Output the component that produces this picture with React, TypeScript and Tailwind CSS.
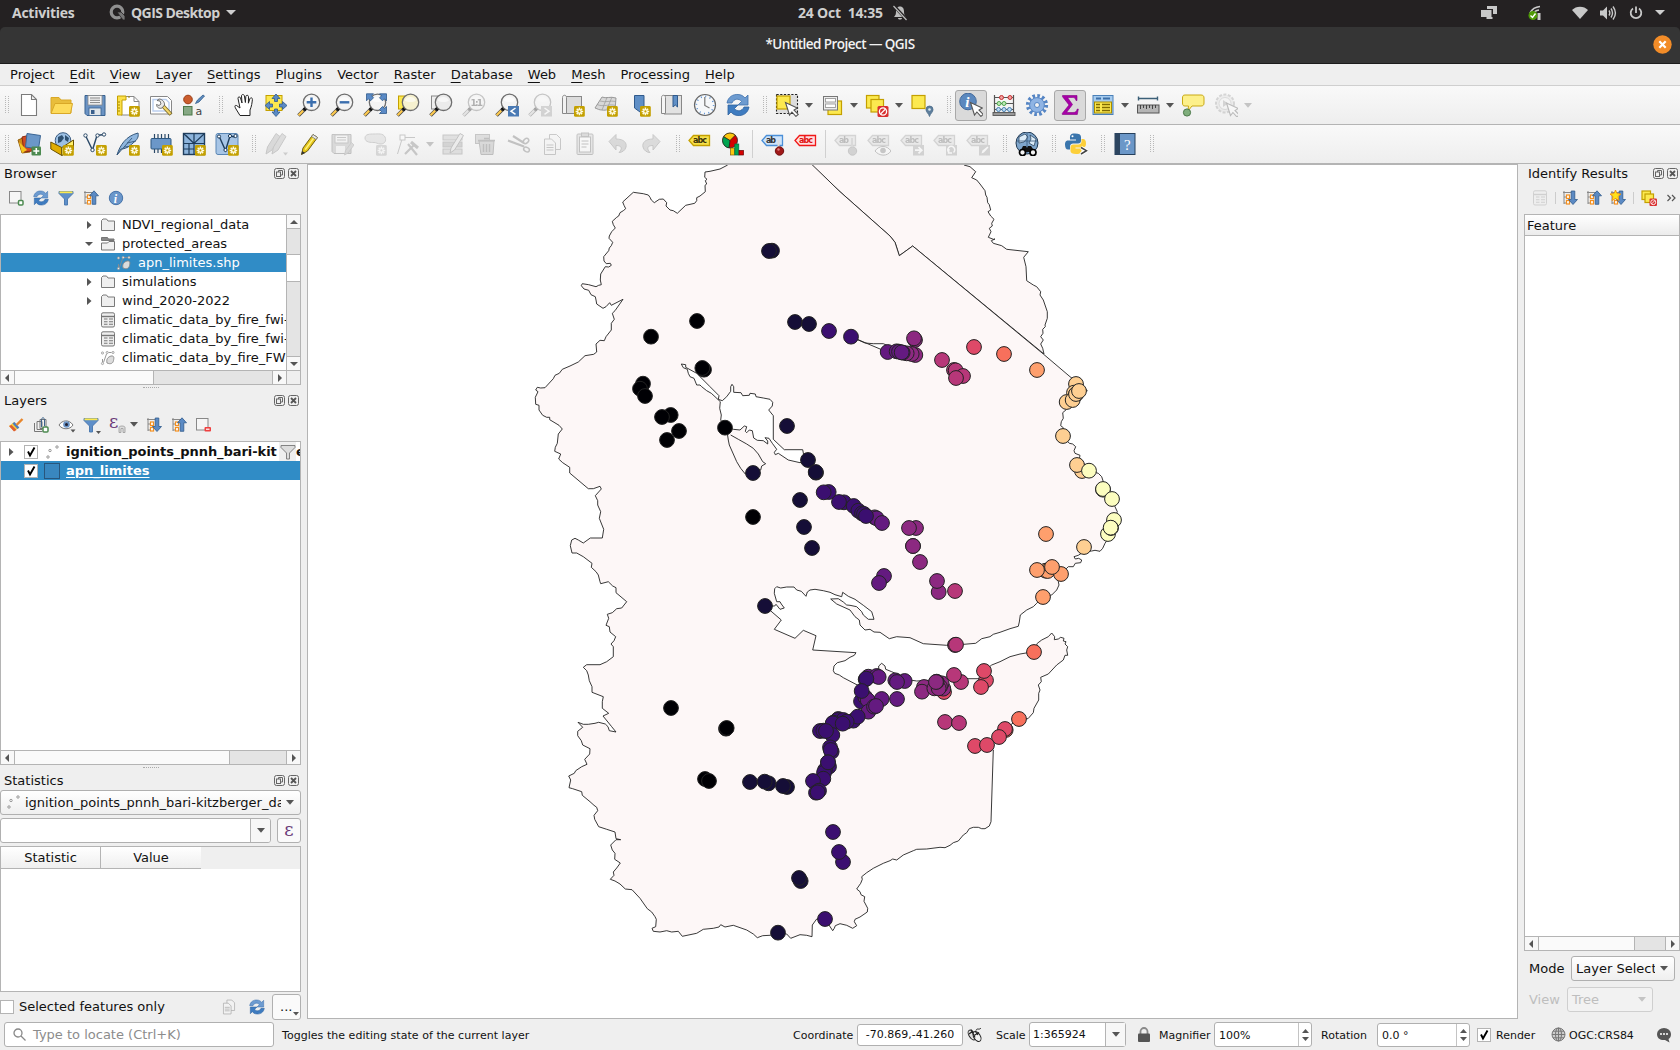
import React from "react";

type Kids = { children?: React.ReactNode };

/* ---------- shared icon pieces ---------- */

const Svg = ({ s = 24, children, cls = "" }: Kids & { s?: number; cls?: string }) => (
  <svg width={s} height={s} viewBox={`0 0 ${s} ${s}`} className={`block shrink-0 ${cls}`} fill="none">
    {children}
  </svg>
);

const Badge = ({ x = 13, y = 13 }: { x?: number; y?: number }) => (
  <g transform={`translate(${x} ${y})`}>
    <rect width="10.8" height="10.8" rx="1.4" fill="#c4a000" />
    <path d="M5.4 1.6v7.6M1.6 5.4h7.6M2.7 2.7l5.4 5.4M8.1 2.7L2.7 8.1" stroke="#fffbe0" strokeWidth="1.5" />
    <circle cx="5.4" cy="5.4" r="1.1" fill="#c4a000" />
  </g>
);

const Lens = ({ fill = "#f4f4f4" }: { fill?: string }) => (
  <g>
    <path d="M1.5 22.5l7-7" stroke="#454545" strokeWidth="3.6" />
    <path d="M1.6 22.2l4.6-4.6" stroke="#fcc94f" strokeWidth="2.2" />
    <path d="M7 17l3-3" stroke="#111" strokeWidth="3.4" />
    <circle cx="14.5" cy="9.3" r="8.2" fill={fill} stroke="#6e6e6e" strokeWidth="1.3" />
    <path d="M8.5 7.5a6.5 6.5 0 0 1 11.5 0c-3 2-8 2-11.5 0z" fill="#fff" opacity=".6" />
  </g>
);

const Cursor = ({ x = 0, y = 0 }: { x?: number; y?: number }) => (
  <path transform={`translate(${x} ${y})`} d="M0 0l4 12.5 2.4-3 4 4.4 2.3-2-4.2-4.4 3.3-2z" fill="#fff" stroke="#555" strokeWidth="1.1" />
);

const Pencil = () => (
  <g transform="translate(2 0)">
    <path d="M2.5 22.5l1.5-6.5L14 2.5l4.5 3L8.5 19z" fill="#e6c619" stroke="#705f12" strokeWidth="1" />
    <path d="M6.2 17.6L16.2 4" stroke="#fff27a" strokeWidth="1.6" />
    <path d="M14 2.5l4.5 3-1.5 2-4.5-3z" fill="#e8e8e8" stroke="#777" strokeWidth=".8" />
    <path d="M2.3 22.8l.9-3.8 3 2z" fill="#333" />
  </g>
);

const Refresh = ({ s = 24 }: { s?: number }) => (
  <svg width={s} height={s} viewBox="0 0 24 24" className="block shrink-0">
    <path d="M1 10C2 4 7 1 12 1.5c3 0 5.500 1.500 7 3.500l3-3v10H12l3.500-3.500C13 5 8 5.500 6 10z" fill="#6d9bd0" stroke="#3f71ad" strokeWidth=".8" />
    <path d="M23 14c-1 6-6 9-11 8.500-3 0-5.500-1.500-7-3.500l-3 3V12h10l-3.500 3.500C11 19 16 18.500 18 14z" fill="#3f7cc0" stroke="#2d62a0" strokeWidth=".8" />
  </svg>
);

const Tag = ({ fill, stroke, color, label = "abc" }: { fill: string; stroke: string; color: string; label?: string }) => (
  <g>
    <path d="M1 8.500L5.500 3.500H21.500V13.500H5.500z" fill={fill} stroke={stroke} strokeWidth="1.3" />
    <text x="5" y="11.200" fontSize="8" fontWeight="700" fontFamily="DejaVu Sans" fill={color} textLength={label === "abc" ? 14 : 10}>
      {label}
    </text>
  </g>
);

const Doc = () => <path d="M4.500 1.500h10l5 5v16h-15z M14.500 1.500v5h5" fill="#fff" stroke="#7b7b7b" strokeWidth="1.100" />;

const YellowSq = ({ x, y, w }: { x: number; y: number; w: number }) => (
  <rect x={x} y={y} width={w} height={w} fill="#fce94f" stroke="#c4a000" strokeWidth="1.200" />
);

const ForbidBadge = ({ x, y, s = 1 }: { x: number; y: number; s?: number }) => (
  <g transform={`translate(${x} ${y}) scale(${s})`}>
    <rect width="11" height="11" rx="1.500" fill="#d83030" />
    <circle cx="5.500" cy="5.500" r="3.600" stroke="#fff" strokeWidth="1.300" />
    <path d="M3 8l5-5" stroke="#fff" strokeWidth="1.300" />
  </g>
);

/* ---------- toolbar icons ---------- */

const icons: Record<string, React.ReactNode> = {
  newDoc: <Doc />,
  open: (
    <g stroke="#d9a827">
      <path d="M1 20V4.500h8l2 2.500h10v13z" fill="#e8bd3c" />
      <path d="M1 20.500l4-10h17.500l-2 10z" fill="#fddb5b" />
    </g>
  ),
  save: (
    <g>
      <path d="M2 2.500h20v20H4l-2-2z" fill="#6a93c4" stroke="#39628f" />
      <rect x="5" y="2.500" width="14" height="9.500" fill="#f4f4f4" stroke="#8a8a8a" strokeWidth=".8" />
      <path d="M7 5h10M7 7.300h10M7 9.600h10" stroke="#777" strokeWidth=".9" />
      <rect x="6" y="15" width="12" height="7.500" fill="#dfe5ea" stroke="#39628f" strokeWidth=".8" />
      <rect x="8" y="17" width="3.500" height="4" fill="#395f8c" />
    </g>
  ),
  newLayout: (
    <g>
      <path d="M5 3.500h13l5 5V22H5z" fill="#fff" stroke="#888" />
      <path d="M18 3.500v5h5" stroke="#888" />
      <path d="M1.500 3h8.500v4H6v15H1.500z" fill="#fbe04a" stroke="#c4a000" />
      <path d="M2 9h2M2 12h2M2 15h2M2 18h2M13 3v2" stroke="#a38600" />
      <Badge />
    </g>
  ),
  layoutMgr: (
    <g>
      <path d="M1.500 3.500h17l4 4V21h-21z" fill="#fff" stroke="#888" />
      <path d="M4 6.500h13l3 3V18H4z" stroke="#bcd0f0" strokeWidth="1.400" />
      <path d="M14 13l8 8.500" stroke="#7a6a2a" strokeWidth="4" />
      <path d="M14.500 13.500l7 7.500" stroke="#f2d56a" strokeWidth="2.200" />
      <path d="M8 7.500l3 .5 1 3-2 1.500-2.500-1c0 3 3 4.500 5.500 3.500l2.500-3C16 9 13 6 10 6z" fill="#e8e8e8" stroke="#666" strokeWidth=".9" />
    </g>
  ),
  style: (
    <g>
      <circle cx="6" cy="6.500" r="4.300" fill="#cb5d2d" stroke="#9c3d14" />
      <path d="M13.500 10.500l2-3.500L21 2l1.500 1-5.500 6z" fill="#5f8cc0" stroke="#2f5c8c" strokeWidth=".8" />
      <rect x="1.500" y="13.500" width="8.500" height="8.500" fill="#86a884" stroke="#4b7849" />
      <text x="13.500" y="21.500" fontSize="11" fontFamily="DejaVu Sans" fill="#444">a</text>
    </g>
  ),
  hand: (
    <path transform="translate(2.500 0)" d="M6.500 22.500l-4-6.500C1 13.500 1 12 3 12.500L6.500 15 4.500 5.500C4.300 3.500 6.500 3.300 7 5l1.500 5L8 3c0-2 2.600-2 2.900 0l1 6.500.4-6c.2-1.800 2.700-1.600 2.700.2l-.1 6.500 1.500-4.500c.6-1.500 2.700-1 2.500.8-.3 3-.8 7-2.400 10.500v5.500z" fill="#fff" stroke="#222" strokeWidth="1" />
  ),
  panSel: (
    <g>
      <rect x="2" y="2.500" width="16" height="15" fill="#fce94f" stroke="#c4a000" />
      <g fill="#5a8ac6" stroke="#305a8c" strokeWidth=".8">
        <path d="M12 1l4 4.500h-2.500v3h-3v-3H8z" />
        <path d="M12 23.500l4-4.500h-2.500v-3h-3v3H8z" />
        <path d="M1 12.500l4.500-4V11h3v3h-3v2.500z" />
        <path d="M23 12.500l-4.500-4V11h-3v3h3v2.500z" />
      </g>
    </g>
  ),
  zoomIn: (
    <g>
      <Lens />
      <path d="M14.500 4.500v9.600M9.700 9.300h9.600" stroke="#3b6fae" strokeWidth="2.400" />
    </g>
  ),
  zoomOut: (
    <g>
      <Lens />
      <path d="M9.700 9.300h9.600" stroke="#3b6fae" strokeWidth="2.400" />
    </g>
  ),
  zoomFull: (
    <g>
      <Lens />
      <g fill="#5a8ac6" stroke="#305a8c" strokeWidth=".8">
        <path d="M3.500.8h7l-2 2 2 2-3 3-2-2-2 2z" />
        <path d="M23.500.8h-7l2 2-2 2 3 3 2-2 2 2z" />
        <path d="M23.500 20.500h-7l2-2-2-2 3-3 2 2 2-2z" />
      </g>
    </g>
  ),
  zoomSel: (
    <g>
      <rect x="2.500" y="3" width="13" height="13" fill="#fce94f" stroke="#c4a000" />
      <Lens fill="#f6f1cf" />
    </g>
  ),
  zoomLayer: (
    <g>
      <rect x="2.500" y="3" width="13" height="13" fill="#eee" stroke="#888" />
      <Lens fill="#ebebeb" />
    </g>
  ),
  zoomNative: (
    <g>
      <Lens />
      <text x="8.500" y="13" fontSize="9" fontWeight="700" fontFamily="DejaVu Sans" fill="#333" textLength="12.500">1:1</text>
    </g>
  ),
  zoomLast: (
    <g>
      <Lens />
      <rect x="13" y="13" width="11" height="10.500" fill="#4a7ab4" />
      <path d="M20.500 15l-4.500 3.200 4.500 3.200" stroke="#fff" strokeWidth="1.500" />
    </g>
  ),
  zoomNext: (
    <g>
      <Lens />
      <rect x="13" y="13" width="11" height="10.500" fill="#9a9a9a" />
      <path d="M16.500 15l4.500 3.200-4.500 3.200" stroke="#fff" strokeWidth="1.500" />
    </g>
  ),
  newMap: (
    <g>
      <rect x="4.500" y="3.500" width="16" height="17" fill="#dcdcdc" stroke="#888" />
      <path d="M1.500 20.500v-16c0-3 4-3 4 0v16z" fill="#f2f2f2" stroke="#888" />
      <Badge />
    </g>
  ),
  new3d: (
    <g stroke="#999">
      <path d="M1 15L8 4c4 2 8-1 14 1l-1 12c-5-2-9 1-13 0-3 0-4-1-7-2z" fill="#d8d8d8" />
      <path d="M3 11.500c7 3 12-1 18.500 1M6 8c6 2 10-1 16 .5M8 17L13 4.500M13 16L18 4" strokeWidth=".7" />
      <g stroke="none">
        <Badge />
      </g>
    </g>
  ),
  bookmarkNew: (
    <g>
      <path d="M7.500 2.500h9.500v18l-4-1.500-5.500-4z" fill="#5f8fc6" stroke="#305a8c" />
      <Badge />
    </g>
  ),
  bookmarks: (
    <g>
      <rect x="4.500" y="2.500" width="17" height="18.500" fill="#e2e2e2" stroke="#888" />
      <path d="M1.500 20.500v-16c0-3 4-3 4 0v16z" fill="#f5f5f5" stroke="#888" />
      <path d="M13 2.500h4.500V14l-2.200-2-2.300 2z" fill="#5f8fc6" stroke="#305a8c" />
    </g>
  ),
  clock: (
    <g>
      <circle cx="12" cy="12" r="10.500" fill="#f6f8fa" stroke="#666" strokeWidth="1.200" />
      <circle cx="12" cy="12" r="8.600" stroke="#5b8fd0" strokeWidth="1.600" strokeDasharray="1 3.500" />
      <path d="M11.800 4v8.500l4.700 2.500" stroke="#777" strokeWidth="1.200" />
    </g>
  ),
  selectRect: (
    <g>
      <rect x="1.500" y="1.500" width="21" height="19" fill="#ddd" stroke="#222" strokeWidth="1.100" strokeDasharray="2.200 1.500" />
      <YellowSq x={2} y={3} w={13} />
      <Cursor x={10.500} y={9.500} />
    </g>
  ),
  selectValue: (
    <g>
      <YellowSq x={8} y={8} w={13.500} />
      <rect x="3.500" y="3.500" width="14" height="13.500" fill="#ededed" stroke="#777" />
      <rect x="5.500" y="5.500" width="10" height="3.500" fill="#fff" stroke="#999" strokeWidth=".9" />
      <rect x="5.500" y="11" width="10" height="3.500" fill="#fff" stroke="#999" strokeWidth=".9" />
    </g>
  ),
  deselect: (
    <g>
      <YellowSq x={1.500} y={2.500} w={12.500} />
      <YellowSq x={6} y={6.500} w={12.500} />
      <ForbidBadge x={12.500} y={13} />
    </g>
  ),
  selectLoc: (
    <g>
      <YellowSq x={2} y={2.500} w={13} />
      <path d="M19.500 23.500c-1-3.500-3.500-4-3.500-7a3.500 3.500 0 0 1 7 0c0 3-2.500 3.500-3.500 7z" fill="#5d7e9c" stroke="#496a88" strokeWidth=".8" />
      <circle cx="19.500" cy="16.500" r="1.300" fill="#dbe8f2" />
    </g>
  ),
  identify: (
    <g>
      <circle cx="9" cy="8.500" r="8.300" fill="#5b88be" stroke="#41699b" />
      <text x="6.300" y="14.200" fontSize="15" fontStyle="italic" fontWeight="700" fontFamily="Liberation Serif" fill="#fff">i</text>
      <Cursor x={11.500} y={9.500} />
    </g>
  ),
  abacus: (
    <g stroke="#555">
      <path d="M2.500 2v18M21.500 2v18M2.500 4.500h19M2.500 10.500h19M2.500 16.500h19" strokeWidth="1.200" />
      <rect x="1" y="19.500" width="22" height="3" fill="#999" strokeWidth=".9" />
      <g fill="#f0a0a0" stroke="#c62f2f"><circle cx="9.500" cy="4.500" r="2" /><circle cx="18" cy="4.500" r="2" /></g>
      <g fill="#bfe8b8" stroke="#4aa84a"><circle cx="7" cy="10.500" r="2" /><circle cx="12" cy="10.500" r="2" /></g>
      <g fill="#bcdcf5" stroke="#4a80b0"><circle cx="6.500" cy="16.500" r="2" /><circle cx="12" cy="16.500" r="2" /><circle cx="17.500" cy="16.500" r="2" /></g>
    </g>
  ),
  gear: (
    <g>
      <circle cx="12" cy="12" r="9.200" stroke="#5585c4" strokeWidth="3.800" strokeDasharray="2.600 2.217" />
      <circle cx="12" cy="12" r="7.400" fill="#8fb4e4" stroke="#5585c4" />
      <circle cx="12" cy="12" r="2.500" fill="#f2f2f2" stroke="#5585c4" />
    </g>
  ),
  sigma: <path d="M4.500 2.500h14.500v5h-1c-.5-2.500-1.500-3-3.500-3H9.500l5 7-6 8h6.500c2.500 0 3.500-1 4.300-3.500h1l-1 5.500H4.300v-1.200L11 12 4.500 3.700z" fill="#a800a8" stroke="#800080" strokeWidth=".6" />,
  table: (
    <g>
      <rect x="2" y="2.500" width="20" height="19" fill="#a5cbef" stroke="#4a80b8" />
      <path d="M5 5.500h5M12 5.500h7" stroke="#3d70a8" strokeWidth="1.800" />
      <rect x="3.500" y="9" width="17" height="11" fill="#fce94f" stroke="#a98c00" />
      <path d="M5 11.500h4M11 11.500h8M5 14.500h4M11 14.500h8M5 17.500h4M11 17.500h8" stroke="#806a00" strokeWidth="1.300" />
    </g>
  ),
  ruler: (
    <g>
      <path d="M2 5.500h20M2.500 3.500v4M21.500 3.500v4" stroke="#3c6078" strokeWidth="1.400" />
      <rect x="1.500" y="12" width="21.500" height="8" fill="#b5b5b5" stroke="#555" />
      <path d="M4.500 12v4M7.500 12v3M10.500 12v4M13.500 12v3M16.500 12v4M19.500 12v3" stroke="#444" />
    </g>
  ),
  tips: (
    <g>
      <path d="M4 2h16c2 0 3 1 3 3v5c0 2-1 3-3 3h-9l-4 5 .5-5H4c-2 0-2.500-1-2.500-3V5c0-2 .5-3 2.500-3z" fill="#fdf08a" stroke="#c9a914" />
      <circle cx="6" cy="19.500" r="3.600" fill="#7fae7c" stroke="#4b7849" />
    </g>
  ),
  action: (
    <g>
      <circle cx="11" cy="10.500" r="9" fill="#ddd" stroke="#999" strokeWidth="2" strokeDasharray="3 1.500" />
      <circle cx="11" cy="10.500" r="6" fill="#f4f4f4" stroke="#aaa" />
      <path d="M9 7l5 3.500L9 14z" fill="#999" />
      <Cursor x={12.500} y={10} />
    </g>
  ),
  dsManager: (
    <g>
      <path d="M1 8l7-3 5 15-8 1z" fill="#d08a1c" stroke="#94600c" />
      <path d="M5 5l8-2 2 16-8 1z" fill="#cf4a24" stroke="#8c2c10" />
      <path d="M2 10l8 8-5 3z" fill="#f5c51e" />
      <path d="M10 1.500l13.500 2-2 13.500-13-2z" fill="#6b97c8" stroke="#3a6594" />
      <rect x="14.500" y="14.500" width="9.500" height="9" rx="1" fill="#4c8a50" />
      <path d="M19.300 16v6M16.300 19h6" stroke="#fff" strokeWidth="1.600" />
    </g>
  ),
  geopackage: (
    <g>
      <circle cx="13" cy="8.500" r="7.800" fill="#9cc0e4" stroke="#3c5c80" />
      <path d="M8 5l4-2 2 3-3 4-3 1zM15 3l4 3-1 4-3-2z" fill="#2e5070" />
      <path d="M.8 10l11 5.500v8L.8 17z" fill="#e0ad00" stroke="#6b5200" />
      <path d="M11.800 15.500L23.500 8v9.500l-11.700 6z" fill="#fff06a" stroke="#6b5200" />
      <Badge />
    </g>
  ),
  shapefile: (
    <g>
      <path d="M2.500 3.500l7 14.500 4.500-14.500 7-1" stroke="#2c4a68" strokeWidth="1.400" />
      <g fill="#fff" stroke="#2c4a68"><circle cx="2.500" cy="3.500" r="1.700" /><circle cx="9.500" cy="18" r="1.700" /><circle cx="14.500" cy="3.500" r="1.700" /><circle cx="21" cy="2.500" r="1.700" /></g>
      <Badge />
    </g>
  ),
  spatialite: (
    <g>
      <path d="M1 23C4 13 10 4 22 1c1 4-1 7-5 10-4 4-8 6-12 6z" fill="#8fb6de" stroke="#35587c" />
      <path d="M1 23L16 6M8 15l9-1M11 11l9-2" stroke="#35587c" strokeWidth=".9" />
      <Badge />
    </g>
  ),
  memory: (
    <g>
      <path d="M5.500 2v5M9 2v5M12.500 2v5M16 2v5M19.500 2v5M5.500 16v5M9 16v5M12.500 16v5" stroke="#2c4a68" strokeWidth="1.200" />
      <rect x="2" y="6.500" width="20" height="10.500" rx="1" fill="#6b97c8" stroke="#2f5880" />
      <Badge />
    </g>
  ),
  mesh: (
    <g>
      <rect x="1.500" y="1.500" width="21" height="21" fill="#8db4dc" stroke="#1f3d5c" strokeWidth="1.400" />
      <path d="M1.500 11.500h21M12 1.500v21M1.500 1.500L12 11.500 22.500 1.500M7 11.500v11M1.500 17h10.500M12 11.500l-8 -8" stroke="#1f3d5c" strokeWidth="1.200" />
      <Badge />
    </g>
  ),
  virtual: (
    <g>
      <rect x="1" y="1.500" width="22" height="21" rx="2" fill="#a7c5e6" stroke="#5a86b4" />
      <path d="M4 4l6.500 14.500L15 4l5 1" stroke="#1f3d5c" strokeWidth="1.400" />
      <g fill="#fff" stroke="#1f3d5c"><circle cx="4" cy="4.500" r="1.600" /><circle cx="10.500" cy="18" r="1.600" /><circle cx="15" cy="4" r="1.600" /><circle cx="20.500" cy="4" r="1.600" /></g>
      <Badge />
    </g>
  ),
  edits: (
    <g>
      <path d="M2 22l1.500-7L12 1.500l4 3L8 18z" fill="#aaa" stroke="#777" />
      <path d="M8 22l1.500-7L18 1.500l4 3L14 18z" fill="#b8b0a8" stroke="#777" />
      <path d="M19 20.500h5l-2.500 3z" fill="#888" />
    </g>
  ),
  pencil: <Pencil />,
  saveEdits: (
    <g>
      <path d="M2 2.500h19v19H4l-2-2z" fill="#aaa" stroke="#666" />
      <rect x="5" y="3" width="13" height="8" fill="#eee" stroke="#777" />
      <path d="M7 5.500h9M7 8h9" stroke="#777" />
      <rect x="6" y="14" width="9" height="7" fill="#eee" />
      <path d="M14.500 23l1-4.500 6-8 2.500 2.500-6 8z" fill="#c8a090" stroke="#a07060" strokeWidth=".8" />
    </g>
  ),
  addPoly: (
    <g>
      <path d="M2 6c0-4 5-4 9-4s9-1 11 3-1 7-4 7c-4 0-4-1.500-7-1.500s-9 0-9-4.500z" fill="#ccc" stroke="#888" />
      <g opacity=".9"><Badge /></g>
    </g>
  ),
  vertex: (
    <g stroke="#777">
      <path d="M1.500 22L6.500 5.500H19" />
      <rect x="4" y="3" width="5" height="5" fill="#fff" />
      <path d="M9 22l9-9M12 12l9 11" strokeWidth="2.200" />
      <path d="M15 10l7 6" strokeWidth="3" />
    </g>
  ),
  modify: (
    <g>
      <rect x="2" y="3" width="19" height="5" fill="#bbb" stroke="#777" />
      <rect x="2" y="10" width="19" height="5" fill="#999" stroke="#777" />
      <rect x="2" y="17" width="19" height="5" fill="#bbb" stroke="#777" />
      <path d="M9 21l1-5L19 1.500l3.500 2L13.500 18z" fill="#ddd" stroke="#666" />
    </g>
  ),
  trash: (
    <g>
      <rect x="1.500" y="2.500" width="14" height="9" fill="#d8a8a0" stroke="#966" />
      <path d="M5 9h15l-1 13.500H7z" fill="#c8a0a0" stroke="#855" />
      <path d="M4 8.500h17M10 6.500h5M9.500 12v8M12.500 12v8M15.500 12v8" stroke="#855" strokeWidth="1.400" />
    </g>
  ),
  cut: (
    <g stroke="#666" strokeWidth="1.500">
      <path d="M1 8.500l16 6M6 4l11 7" strokeWidth="2.200" />
      <ellipse cx="19" cy="9" rx="3" ry="2.200" transform="rotate(-40 19 9)" />
      <ellipse cx="19.500" cy="17.500" rx="3" ry="2.200" transform="rotate(30 19.500 17.500)" />
    </g>
  ),
  copy: (
    <g fill="#f4f4f4" stroke="#777">
      <path d="M9.500 2.500h7l4 4v11h-11z" />
      <path d="M4.500 7h7l4 4v11.500h-11z" />
      <path d="M6.500 13h7M6.500 15.500h7M6.500 18h7" />
    </g>
  ),
  paste: (
    <g stroke="#666">
      <rect x="4" y="2" width="16" height="20.500" rx="1" fill="#ccc" />
      <rect x="6.500" y="5" width="11" height="15" fill="#fff" />
      <rect x="8.500" y="1" width="7" height="3.500" fill="#aaa" />
      <path d="M8.500 9h7M8.500 12h7M8.500 15h5" />
    </g>
  ),
  undo: <path d="M3 9.500l7-7v4.500c8 0 11 4 10 8-.8 3.500-4 5.500-7 5.500 3-3 4-7-3-7v4.500z" fill="#a9a9a9" stroke="#777" />,
  redo: <path d="M21 9.500l-7-7v4.500C6 7 3 11 4 15c.8 3.500 4 5.500 7 5.500-3-3-4-7 3-7v4.500z" fill="#a9b2a9" stroke="#777" />,
  label: <Tag fill="#f7e04a" stroke="#c4a000" color="#3a3208" />,
  diagram: (
    <g>
      <circle cx="9" cy="8.500" r="7.500" fill="#d40000" />
      <path d="M9 8.500L2.500 4.500A7.500 7.500 0 0 1 14.500 3z" fill="#fcc60e" />
      <path d="M9 8.500L2.500 4.700A7.500 7.500 0 0 0 8 16z" fill="#00a551" />
      <path d="M9 8.500L2.500 4.500M9 8.500L8 16M9 8.500L14.500 3" stroke="#222" strokeWidth=".8" />
      <circle cx="9" cy="8.500" r="7.500" stroke="#222" strokeWidth=".8" />
      <rect x="9.500" y="16" width="4" height="7" fill="#fcc60e" stroke="#806000" strokeWidth=".7" />
      <rect x="13.800" y="12" width="4" height="11" fill="#00a551" stroke="#064" strokeWidth=".7" />
      <rect x="18" y="18.500" width="4.500" height="4.500" fill="#d40000" stroke="#600" strokeWidth=".7" />
    </g>
  ),
  labelPin: (
    <g>
      <Tag fill="#cfe4fa" stroke="#4a8fd8" color="#333" label="ab" />
      <path d="M17.500 8v10" stroke="#ddd" strokeWidth="2" />
      <circle cx="18.500" cy="19" r="4.200" fill="#a01818" stroke="#701010" />
      <circle cx="17.500" cy="17.500" r="1.200" fill="#e08080" />
    </g>
  ),
  labelRed: <Tag fill="#ffdede" stroke="#f01818" color="#e01010" />,
  labelPin2: (
    <g>
      <Tag fill="#ddd8b8" stroke="#a09870" color="#555" label="ab" />
      <circle cx="18.500" cy="19" r="4.200" fill="#999" stroke="#777" />
      <path d="M18 6v9" stroke="#aaa" strokeWidth="2" />
    </g>
  ),
  labelEye: (
    <g>
      <Tag fill="#ddd8b8" stroke="#a09870" color="#555" />
      <path d="M8 19c4-6 12-6 16 0-4 6-12 5-16 0z" fill="#fff" stroke="#666" />
      <circle cx="16" cy="18.500" r="2.800" fill="#777" />
    </g>
  ),
  labelMove: (
    <g>
      <Tag fill="#ddd8b8" stroke="#a09870" color="#555" />
      <rect x="13" y="13" width="11" height="10.500" fill="#999" />
      <path d="M15 18.200h6M18.500 15l3.300 3.200-3.300 3.200" stroke="#fff" strokeWidth="1.700" />
    </g>
  ),
  labelRotate: (
    <g>
      <Tag fill="#ddd8b8" stroke="#a09870" color="#555" />
      <rect x="13" y="13" width="11" height="10.500" fill="#999" />
      <path d="M16 20.500a3.500 3.500 0 1 1 4.500 0M16 17l-.5 4 3.500 0" stroke="#fff" strokeWidth="1.500" />
    </g>
  ),
  labelEdit: (
    <g>
      <Tag fill="#ddd8b8" stroke="#a09870" color="#555" />
      <rect x="13" y="13" width="11" height="10.500" fill="#999" />
      <path d="M15.500 21.500l1-3 5-4 1 1-4.500 5z" fill="#fff" />
    </g>
  ),
  metasearch: (
    <g>
      <circle cx="12" cy="11" r="11" fill="#7fa6cc" stroke="#203850" />
      <path d="M4 5l6-3 3 3-4 5-5 1zM15 3l6 4-2 7-5-3 2-4z" fill="#dcecf8" stroke="#203850" strokeWidth=".7" />
      <path d="M12 1v20M1.500 9h21" stroke="#36597c" strokeWidth=".8" />
      <path d="M5 20l3-6h3l1 2 1-2h3l4 6z" fill="#111" />
      <circle cx="7.500" cy="20.500" r="3" fill="#f4f4f4" stroke="#000" strokeWidth="1.700" />
      <circle cx="18" cy="20.500" r="3" fill="#f4f4f4" stroke="#000" strokeWidth="1.700" />
    </g>
  ),
  python: (
    <g>
      <path d="M11 1.500c-5 0-5 2-5 5v1h6v1H4C1.500 8.500 1 11 1 12.500c0 3 1 5 3 5h2v-3c0-2 1.500-3 3-3h5c2 0 3-1 3-3V5c0-2.500-2-3.500-6-3.500z" fill="#3a75ac" />
      <path d="M12 22c5 0 5.500-2 5.500-4.500V16.500h-6v-1h7.500c2.500 0 3-2 3-4 0-3-1-4.500-3-4.500h-1.500v2.500c0 2-1.500 3-3 3H9.500c-2 0-3 1-3 3V19c0 2 2 3 5.500 3z" fill="#fccf3a" />
      <circle cx="8.500" cy="4.300" r="1" fill="#fff" />
      <path d="M17 15.500l5.500 3.200L17 22" stroke="#fff" strokeWidth="3.500" />
      <path d="M17 15.500l5.500 3.200L17 22" stroke="#444" strokeWidth="1.500" />
    </g>
  ),
  help: (
    <g>
      <rect x="2" y="1.500" width="20" height="21" fill="#6b97c8" stroke="#26405c" />
      <rect x="2" y="1.500" width="5" height="21" fill="#2c4560" />
      <text x="11" y="17.500" fontSize="15" fontFamily="Liberation Serif" fill="#fff">?</text>
    </g>
  ),
};

const Handle = () => (
  <div className="flex w-4 shrink-0 justify-end pr-[3px]">
    <svg width="4" height="26" className="block">
      {Array.from({ length: 9 }, (_, i) => (
        <g key={i} fill="#b8b8b8">
          <rect x="0" y={i * 2 + 4} width="1" height="1" />
          <rect x="3" y={i * 2 + 4} width="1" height="1" />
        </g>
      ))}
    </svg>
  </div>
);

const Caret = ({ dim = false }: { dim?: boolean }) => (
  <svg width="8" height="5" className="block shrink-0">
    <path d="M0 0h8L4 4.800z" fill={dim ? "#c4c4c4" : "#555"} />
  </svg>
);

const Tool = ({ n }: { n: string }) => {
  const dim = n.startsWith("-");
  const on = n.startsWith("+");
  const menu = n.endsWith("~");
  const key = n.replace(/[-+~]/g, "");
  return (
    <div className={`flex h-[33px] shrink-0 items-center ${menu ? "w-[45px]" : "w-[33px]"}`}>
      <div className={`flex h-[31px] w-[32px] shrink-0 items-center justify-center rounded-[3px] ml-px border ${on ? "border-[#a8a8a8] bg-[#dadada]" : "border-transparent"}`}>
        <div className={`-ml-px ${dim ? "opacity-35 grayscale" : ""}`}>
          {key === "refresh" ? <Refresh /> : <Svg>{icons[key]}</Svg>}
        </div>
      </div>
      {menu && <div className="ml-[2px]"><Caret dim={dim} /></div>}
    </div>
  );
};

const row1 = "newDoc open save newLayout layoutMgr style | hand panSel zoomIn zoomOut zoomFull zoomSel zoomLayer -zoomNative zoomLast -zoomNext newMap new3d bookmarkNew bookmarks clock refresh | selectRect~ selectValue~ deselect~ selectLoc | +identify abacus gear +sigma table~ ruler~ tips -action~";
const row2 = "dsManager geopackage shapefile spatialite memory mesh virtual | -edits pencil -saveEdits -addPoly -vertex~ -modify -trash -cut -copy -paste -undo -redo | label diagram / labelPin labelRed / -labelPin2 -labelEye -labelMove -labelRotate -labelEdit | metasearch | python | help |";

const Toolbar = ({ items }: { items: string }) => (
  <div className="flex h-[39px] shrink-0 items-center overflow-hidden border-b border-[#b4b4b4] bg-gradient-to-b from-[#f9f9f9] to-[#eeeeee]">
    <div className="-ml-1">
      <Handle />
    </div>
    {items.split(" ").map((n, i) =>
      n === "|" ? <Handle key={i} /> : n === "/" ? <div key={i} className="ml-[3px] mr-[3px] h-[28px] w-px bg-[#d0d0d0]" /> : <Tool key={i} n={n} />
    )}
  </div>
);

/* ---------- small panel icons ---------- */

const TreeArrow = ({ up = false, star = false }: { up?: boolean; star?: boolean }) => (
  <Svg s={16}>
    <path d="M2 1v13M1 2.500h10M2 7h4M2 13h3" stroke="#888" />
    <rect x="4.500" y="5" width="3" height="3.500" stroke="#f39020" strokeWidth="1.200" fill="#fff" />
    <rect x="4.500" y="10.500" width="3" height="3.500" stroke="#f39020" strokeWidth="1.200" fill="#fff" />
    <path d={up ? "M11 .8l4.500 5h-2.700v8.500H9.200V5.800H6.500z" : "M11 14.500l-4.500-5h2.700V1h3.600v8.500h2.700z"} fill="#5b8ac4" stroke="#305a8c" strokeWidth=".8" />
    {star && <path d="M5.500 0l1.500 3.500 4 .5-3 2.500 1 4-3.500-2-3.500 2 1-4-3-2.500 4-.5z" fill="#ffe21a" stroke="#f08c00" strokeWidth=".8" />}
  </Svg>
);

const Funnel = ({ gray = false }: { gray?: boolean }) => (
  <Svg s={16}>
    <path d="M1 1.500h14v2l-5.500 5.500v6h-3v-6L1 3.500z" fill={gray ? "#ddd" : "#5e8fc9"} stroke={gray ? "#777" : "#4474ac"} strokeWidth=".9" />
    {!gray && <path d="M1.500 2.300h13" stroke="#fce94f" strokeWidth="1.800" />}
  </Svg>
);

const SmallSheet = ({ plus = false }: { plus?: boolean }) => (
  <Svg s={16}>
    <rect x="1.500" y="1.500" width="11.500" height="11.500" fill="#f6f6f6" stroke="#888" />
    {plus ? (
      <g><rect x="10.500" y="10.500" width="4.500" height="4.500" rx="1" fill="#fff" stroke="#4c8a50" strokeWidth="1.500" /></g>
    ) : (
      <g><rect x="9.500" y="10" width="6.500" height="4.500" rx="1" fill="#ef4040" /><path d="M11 12.200h3.500" stroke="#fff" strokeWidth="1.200" /></g>
    )}
  </Svg>
);

const InfoIcon = () => (
  <Svg s={16}>
    <circle cx="8" cy="8" r="6.700" fill="#6a96ca" stroke="#4673a9" />
    <text x="5.800" y="12.500" fontSize="12" fontStyle="italic" fontWeight="700" fontFamily="Liberation Serif" fill="#fff">i</text>
  </Svg>
);

const FolderIcon = ({ open = false }: { open?: boolean }) => (
  <Svg s={16}>
    {open ? (
      <g stroke="#777"><path d="M1.500 3V1.500h6l1 1.500h5.500v1.500h-12.500z" fill="#888" /><path d="M1.500 14V7h6l1.500-1.500h5.500V14z" fill="#f0f0f0" /></g>
    ) : (
      <path d="M1.500 13.500V3.500L3 2h3.500L8 4h6.500v9.500z" fill="#efefef" stroke="#7a7a7a" />
    )}
  </Svg>
);

const SheetIcon = () => (
  <Svg s={16}>
    <rect x="1.500" y=".8" width="13" height="14.200" rx="1.500" fill="#eee" stroke="#777" />
    <path d="M2 4.500h12" stroke="#777" strokeWidth="1.400" />
    <path d="M4 7h3.500M9 7h4M4 9.700h3.500M9 9.700h4M4 12.300h3.500M9 12.300h4" stroke="#777" strokeWidth="1.100" />
  </Svg>
);

const VectorIcon = () => (
  <Svg s={16}>
    <path d="M2.500 12v-3M3.500 12.500L6.500 4M8.500 2.500h3" stroke="#8b8b8b" strokeWidth=".9" />
    <g fill="#eee" stroke="#999" strokeWidth=".8"><circle cx="2.500" cy="3" r="1.100" /><circle cx="7.200" cy="2.500" r="1.100" /><circle cx="13" cy="2.500" r="1.100" /><circle cx="2.500" cy="13.500" r="1.100" /></g>
    <path d="M7 13c-1-4 1-6 4-7 3.500-.5 3 2 2.500 4.500-.5 3-3 4-6.500 2.500z" fill="#dcdcdc" stroke="#888" strokeWidth=".9" />
  </Svg>
);

const PointsIcon = () => (
  <Svg s={16}>
    <g fill="#fff" stroke="#8a8a8a" strokeWidth=".9"><circle cx="5" cy="6.500" r="1.200" /><circle cx="12" cy="3" r="1.200" /><circle cx="3" cy="13" r="1.200" /></g>
  </Svg>
);

const Eps = () => <span className="font-['DejaVu_Serif'] text-[18px] leading-none text-[#6b3a78]">ε</span>;

const EyeIcon = () => (
  <Svg s={18}>
    <path d="M1 9c3-5 10-6 14 0-3 5-11 5-14 0z" fill="#fff" stroke="#777" />
    <circle cx="8.500" cy="8.500" r="3.300" fill="#6a93c4" />
    <circle cx="8.500" cy="8.500" r="1.500" fill="#223" />
    <path d="M12.500 13.500h5l-2.500 3z" fill="#555" />
  </Svg>
);

const Brush = () => (
  <Svg s={16}>
    <path d="M1 9l5 5 5-3-5-6z" fill="#f5cb42" />
    <path d="M1 9l2.500-1 5 5-2.500 1.500z" fill="#e06030" />
    <path d="M4.500 6.500l5 5.500 1.800-1.500-4.800-5.500z" fill="#4a7cc0" />
    <path d="M8.500 8L14.500 2" stroke="#e8862c" strokeWidth="2.400" />
  </Svg>
);

const AddGroup = () => (
  <Svg s={16}>
    <g fill="#f2f2f2" stroke="#777"><path d="M1.500 6v8.500h8" /><path d="M4 4.500h5v8H4zM7 2.500h6v9H7z" /></g>
    <path d="M8.500 10V3c0-3 3-3 3 0v6" stroke="#40648a" />
    <rect x="10" y="10" width="5" height="5" rx="1" fill="#fff" stroke="#4c8a50" strokeWidth="1.500" />
  </Svg>
);

/* ---------- widgets ---------- */

const DockTitle = ({ title, cls = "" }: { title: string; cls?: string }) => (
  <div className={`flex h-5 shrink-0 items-center justify-between pl-1 ${cls}`}>
    <span>{title}</span>
    <span className="flex gap-[3px]">
      <Svg s={11}>
        <rect x=".5" y=".5" width="10" height="10" rx="2" stroke="#666" />
        <rect x="2.500" y="4" width="4" height="4.500" stroke="#666" />
        <path d="M4.500 4V2.500h4V7h-2" stroke="#666" />
      </Svg>
      <Svg s={11}>
        <rect x=".5" y=".5" width="10" height="10" rx="2" stroke="#666" />
        <path d="M3 3l5 5M8 3L3 8" stroke="#555" strokeWidth="1.800" />
      </Svg>
    </span>
  </div>
);

const arrowPath: Record<string, string> = {
  left: "M6 1v8L2 5z",
  right: "M3 1v8l4-4z",
  up: "M1 7h8L5 3z",
  down: "M1 3h8L5 7z",
};

const ArrowBox = ({ dir }: { dir: string }) => (
  <div className="flex h-[13px] w-[13px] shrink-0 items-center justify-center bg-[#f8f8f8]">
    <svg width="10" height="10"><path d={arrowPath[dir]} fill="#555" /></svg>
  </div>
);

const HScroll = ({ before, thumb, cls = "" }: { before: string; thumb: string; cls?: string }) => (
  <div className={`flex h-[14px] shrink-0 border-t border-[#b4b4b4] bg-[#e4e4e4] ${before} ${cls}`}>
    <ArrowBox dir="left" />
    <div className={`border-x border-[#b4b4b4] bg-[#fafafa] ${thumb}`} />
    <div className="flex-1" />
    <div className="border-l border-[#b4b4b4]"><ArrowBox dir="right" /></div>
  </div>
);

const Dots = ({ cls }: { cls: string }) => (
  <div className={`flex shrink-0 justify-center ${cls}`}>
    <div className="mt-[2px] h-px w-4 border-t border-dotted border-[#aaa]" />
  </div>
);

const field = "border border-[#b0b0b0] rounded-[3px]";

const Check = ({ on = false }: { on?: boolean }) => (
  <svg width="14" height="14" className="block shrink-0">
    <rect x=".5" y=".5" width="13" height="13" fill="#fff" stroke="#b4b4b4" />
    {on && <path d="M4 6.500l2 4 4.500-8" stroke="#000" strokeWidth="1.900" fill="none" />}
  </svg>
);

const Expander = ({ open = false }: { open?: boolean }) => (
  <svg width="10" height="10" className="block shrink-0"><path d={open ? "M1 3h8L5 7z" : "M3 1v8l4.500-4z"} fill="#555" /></svg>
);

const TreeRow = ({ exp, icon, text }: { exp?: string; icon: React.ReactNode; text: string }) => (
  <div className="flex h-[19px] shrink-0 items-center pl-[83px]">
    <div className="w-[16px] shrink-0">{exp && <Expander open={exp === "open"} />}</div>
    {icon}
    <span className="ml-[6px] whitespace-nowrap">{text}</span>
  </div>
);

/* ---------- map ---------- */

const W = (ox: number, oy: number, v: number[]) => {
  const out: string[] = [];
  for (let i = 0; i < v.length; i += 2) out.push(`${(ox + v[i] / 3).toFixed(1)},${(oy + v[i + 1] / 3).toFixed(1)}`);
  return out.join(" ");
};

const park = [
  W(520, 160, [872,10,623,10,623,15,600,27,570,34,555,36,554,52,561,58,556,62,560,72,555,76,556,95,540,108,530,113,530,122,524,130,497,136,472,160,460,152,450,150,438,138,440,128,430,117,418,118,403,128,394,120,390,112,385,105,370,101,340,97,308,126,312,136,317,146,310,152,300,158,296,168,290,172,277,184,280,194,286,204,275,215,268,228,267,235,278,247,274,257,268,264,266,272,251,290,252,303,259,311,271,310,274,316,266,321,256,320,242,342,241,360,244,374,236,376,228,380,206,374,187,371,184,377,192,387,206,391,213,404,226,410,228,420,230,432,249,445,258,440,269,428,274,436,309,418,285,452,277,460,283,478,274,490,274,510,258,530,253,542,240,541,228,552,230,576,221,583,195,587,175,606,150,618,127,628,118,640,105,646,100,656,75,683,62,684,52,682,47,690,54,695,46,712,47,733,57,736,57,750,68,766,80,772,89,772,89,779,117,796,127,807,115,822,112,850,106,862,104,874,122,882,116,897,128,908,149,922,149,939,205,986,220,986,240,979,244,987,226,1007,233,1022,233,1035,242,1055,238,1075,251,1108]),
  W(520, 530, [247,24,211,24,190,39,175,30,165,25,155,30,151,47,156,69,170,69,190,80,216,100,214,112,228,125,235,135,240,155,242,161,265,155,278,168,288,173,288,188,320,215,305,234,290,236,277,248,262,253,266,265,258,286,268,290,270,306,287,320,282,332,273,342,280,350,280,380,260,395,240,404,200,404,190,412,200,422,205,435,208,452,216,470,216,487,250,500,247,515,247,535,266,550,249,558,275,590,288,606,268,602,264,590,256,582,236,577,225,580,205,583,190,583,174,577,188,592,173,604,173,617,184,632,188,645,210,656,209,672,194,688,201,703,185,710,167,722,163,730,146,738,152,750,147,773,158,776,185,785,187,796,210,815,222,826,230,832,233,842,222,856,224,868,236,890,260,898,285,906,288,926,302,929,288,929,272,945,277,960,285,970,284,988,301,999,290,1014,280,1026,282,1036,271,1048,285,1053,300,1062,316,1077,336,1079,360,1105,382,1136,395,1146,405,1160,409,1168,407,1190,396,1195,400,1204,420,1206,440,1202,455,1206,475,1204,487,1219,530,1210,550,1198,580,1195,597,1191,602,1184,615,1191,640,1186,680,1200,700,1212,712,1223,728,1217,750,1216,773,1208,800,1212,812,1225,840,1214,860,1216,876,1220]),
  W(800, 540, [37,1155,50,1137,75,1137,98,1172,103,1165,106,1157,120,1151,140,1156,158,1165,170,1157,163,1145,165,1138,180,1131,202,1116,203,1105,192,1084,194,1070,183,1064,180,1055,170,1047,182,1030,187,1018,185,1010,200,998,220,985,250,970,270,962,278,957,290,960,310,945,340,932,350,928,380,927,420,922,435,923,450,916,460,908,475,903,490,885,500,878,508,866,520,862,535,862,545,866,555,866,568,858,573,845,580,630,560,615,597,591,615,567,657,536,684,536,700,518,702,505,716,480,716,460,720,450,715,435,724,425,722,412,745,402,770,375,790,360,795,346,803,346,800,330,803,320,795,312,798,305,790,303,792,295,782,292,775,297,763,299,764,290,755,279,745,290,725,300,712,310,702,335,660,342,630,350,600,365,575,375,552,393,552,416,500,416,462,405,400,420,350,423,330,420,275,395,257,388,255,378,245,370,236,378,236,392,205,410,190,430,172,435,130,413,118,405,104,400,100,392,102,378,112,368,135,362,150,352,163,346,168,338,38,330,48,287,10,271,-15,295,-77,268,-56,240,-84,216,-105,198,-76,198,-72,193,-60,208,-47,204,-56,192,-60,185,-70,185,-77,160,-76,146,-70,140,-58,144,-40,141,-18,141,-10,150,4,154,18,169,22,156,30,150,45,148,70,152,90,157,105,164,125,170,128,157,145,169,165,178,190,196,215,215,222,238,205,238,190,225,185,215,170,200,150,196,140,195,130,186,115,176,92,177,110,192,150,210,165,230,178,240,180,255,195,270,210,268,222,276,240,277,268,296,290,290,330,293,370,311,440,316,467,315,527,310,545,296,570,290,580,283,600,277,630,266,655,259,658,246,661,225,680,210,700,200,710,190,729,170,755,165,770,150,777,135,775,125,783,102,805,80,820,80,826,70,842,68,845,60,836,55,826,57,822,50,835,46,852,35,875,33,885,31,900,34,908,25,915,10,922,0]),
  W(840, 160, [812,1110,822,1080,832,1055,825,1040,816,1017,800,985,790,965,785,950,775,940,747,932,711,915,718,898,720,886,705,880,702,872,707,860,698,852,688,850,669,828,670,803,662,797,664,785,670,775,668,758,680,748,717,693,742,693,736,685,690,650,610,582,218,258,178,287,165,247,150,228,0,95]),
].join(" ");

const north = W(840, 160, [-90,10,372,10,372,15,390,20,407,35,395,53,410,60,420,72,435,92,437,105,441,112,443,128,448,134,452,150,444,155,452,168,462,178,455,190,457,198,448,205,453,215,445,232,460,238,465,237,454,242,460,250,485,257,500,268,565,275,551,292,558,320,560,362,580,375,590,380,602,395,600,405,610,420,622,455,622,475,615,495,616,500,608,508,609,520,602,530,610,540,602,552,608,565,612,582,218,258,178,287,165,247,150,228,0,95]);

const lake = W(520, 160, [484,612,497,614,497,622,530,640,570,680,597,707,595,718,607,722,620,710,632,694,632,680,636,673,641,680,641,697,663,698,668,707,688,706,690,700,706,702,708,710,730,714,750,718,758,727,757,738,746,750,760,767,760,838,793,869,848,869,852,890,864,900,840,908,805,900,775,880,766,884,763,877,770,868,757,850,747,835,735,833,743,843,743,852,730,842,712,841,701,834,697,812,688,810,680,818,676,814,680,800,673,798,660,810,640,808,615,800,602,780,604,765,599,745,601,725,585,710,574,700,560,692,545,680,540,675,530,675,522,655,510,650,505,640,502,628,490,623]);

const points: [number, number, [string, number[]][]][] = [
  [520, 160, [
    ["#000004", [531,483,393,530,552,629,547,624,369,671,360,686,375,708,452,765,426,771,477,813,441,840,615,803,699,1071]],
    ["#150e37", [756,272,747,273,825,486,867,492,801,798,864,900,888,938,887,936,699,939,840,1020,852,1101]],
    ["#3b0f70", [927,513,993,530,926,996,911,997]],
  ]],
  [840, 160, [
    ["#641a80", [104,1072,110,1075,126,1089]],
    ["#3b0f70", [12,1027,-3,1026,41,1038,55,1052,66,1060,72,1062,78,1068]],
    ["#8c2981", [225,540,222,535,226,585,215,582,200,580]],
    ["#641a80", [143,576,170,574,177,575,188,578,185,577]],
    ["#8c2981", [228,1104,207,1104,219,1158]],
    ["#b73779", [306,600,342,630,347,631,369,648,348,654]],
    ["#de4968", [402,561]],
    ["#f7705c", [492,582]],
    ["#fe9f6d", [591,630,618,1122]],
    ["#fecf92", [708,672,702,698,708,703,680,726,698,720,708,702,717,693,669,828,726,933,711,915,732,1161]],
    ["#fcfdbf", [747,932,789,989,789,987,816,1017,822,1080,804,1122,813,1104,812,1103]],
  ]],
  [520, 530, [
    ["#000004", [453,534,618,596,620,594,555,747,567,753]],
    ["#150e37", [876,54,735,228,690,756,746,760,734,755,801,771,789,768,842,1053,837,1044,774,1208]],
  ]],
  [800, 540, [
    ["#8c2981", [339,18,360,66,416,156,411,123]],
    ["#b73779", [465,153]],
    ["#641a80", [252,108,237,129]],
    ["#fe9f6d", [737,92,743,93,783,102,711,90,756,81,729,171]],
    ["#b73779", [465,315,468,314]],
    ["#f7705c", [702,336,657,537,617,570]],
    ["#de4968", [558,421,552,393,543,441,615,567,597,591,525,618,561,615,432,456]],
    ["#b73779", [435,546,477,549,483,426,462,405]],
    ["#8c2981", [372,441,366,455,403,445,430,446,425,430,420,440,416,445,410,425,408,426]],
    ["#641a80", [205,410,230,408,236,411,314,423,286,421,291,426,291,477,245,477]],
    ["#3b0f70", [197,418,199,416,183,484]],
    ["#641a80", [196,472,203,480,205,515,222,500,228,498]],
    ["#3b0f70", [185,453,160,542,173,530,115,537,112,540,130,540,140,545,100,548,98,550,128,551,60,573,70,572,97,585,78,573,90,622,95,635,92,630,87,680,84,667,75,690,72,698,70,716,39,723,48,758,57,752,53,757,84,667,99,876,129,966,117,936,75,1137]],
  ]],
];

const MapCanvas = () => (
  <svg width="1208" height="853" viewBox="308 165 1208 853" className="block">
    <g fill="#fdf7f7" stroke="#232323" strokeWidth=".9" strokeLinejoin="round">
      <polygon points={north} />
      <polygon points={park} />
      <polygon points={lake} fill="#fff" />
      <polygon points={W(840, 160, [33,530,75,549,100,551,130,551,150,560,143,576,125,569])} fill="#fff" />
      <polyline points={W(520, 160, [622,820,625,840,628,855,640,882,650,905,662,925,676,942,699,939,722,930,725,918,737,911,728,905,715,882,700,865,680,852,655,838,632,825])} />
    </g>
    <g stroke="#232323" strokeWidth="1">
      {points.map(([ox, oy, groups]) =>
        groups.map(([c, v], g) =>
          v.map((_, i) => (i % 2 ? null : <circle key={`${ox}-${g}-${i}`} cx={ox + v[i] / 3} cy={oy + v[i + 1] / 3} r="7.400" fill={c} />))
        )
      )}
    </g>
  </svg>
);

/* ---------- page ---------- */

const menus: [string, string, string][] = [
  ["Pro", "j", "ect"], ["", "E", "dit"], ["", "V", "iew"], ["", "L", "ayer"], ["", "S", "ettings"], ["", "P", "lugins"], ["Vect", "o", "r"],
  ["", "R", "aster"], ["", "D", "atabase"], ["", "W", "eb"], ["", "M", "esh"], ["Pro", "c", "essing"], ["", "H", "elp"],
];

const Spin = () => (
  <div className="flex h-full w-[13px] flex-col items-center justify-center gap-1 border-l border-[#c4c4c4]">
    <svg width="7" height="4" className="block"><path d="M0 4h7L3.500 0z" fill="#555" /></svg>
    <svg width="7" height="4" className="block"><path d="M0 0h7L3.500 4z" fill="#555" /></svg>
  </div>
);

const LeftDock = () => (
  <div className="flex w-[307px] shrink-0 flex-col pr-[6px]">
    <DockTitle title="Browser" cls="pr-[2px] pb-[2px]" />
    <div className="flex h-[29px] shrink-0 items-center gap-[9px] pl-2 pb-px">
      <SmallSheet plus />
      <Refresh s={16} />
      <Funnel />
      <TreeArrow up />
      <InfoIcon />
    </div>
    <div className="flex h-[171px] shrink-0 flex-col border border-[#b4b4b4] bg-white mt-px">
      <div className="flex min-h-0 flex-1">
        <div className="flex min-w-0 flex-1 flex-col overflow-hidden">
          <TreeRow exp="closed" icon={<FolderIcon />} text="NDVI_regional_data" />
          <TreeRow exp="open" icon={<FolderIcon open />} text="protected_areas" />
          <div className="flex h-[19px] shrink-0 items-center bg-[#308cc6] pl-[115px] text-white">
            <VectorIcon />
            <span className="ml-[6px]">apn_limites.shp</span>
          </div>
          <TreeRow exp="closed" icon={<FolderIcon />} text="simulations" />
          <TreeRow exp="closed" icon={<FolderIcon />} text="wind_2020-2022" />
          <TreeRow icon={<SheetIcon />} text="climatic_data_by_fire_fwi-" />
          <TreeRow icon={<SheetIcon />} text="climatic_data_by_fire_fwi-" />
          <TreeRow icon={<VectorIcon />} text="climatic_data_by_fire_FW" />
          <TreeRow icon={<VectorIcon />} text="" />
        </div>
        <div className="flex w-[14px] shrink-0 flex-col border-l border-[#b4b4b4] bg-[#e4e4e4]">
          <ArrowBox dir="up" />
          <div className="h-[26px] border-t border-[#b4b4b4]" />
          <div className="h-[28px] border-y border-[#b4b4b4] bg-white" />
          <div className="flex-1 border-b border-[#b4b4b4]" />
          <ArrowBox dir="down" />
        </div>
      </div>
      <div className="flex">
        <HScroll before="flex-1" thumb="w-[140px]" />
        <div className="h-[14px] w-[14px] border-l border-t border-[#b4b4b4] bg-[#efefef]" />
      </div>
    </div>
    <Dots cls="h-[6px]" />
    <DockTitle title="Layers" cls="pr-[2px] pb-[2px]" />
    <div className="flex h-[30px] shrink-0 items-center pl-2 pb-[3px]">
      <Brush />
      <div className="ml-[9px]"><AddGroup /></div>
      <div className="ml-[9px]"><EyeIcon /></div>
      <div className="relative ml-[7px]">
        <Funnel />
        <svg width="5" height="3" className="absolute -bottom-px -right-[2px]"><path d="M0 0h5L2.500 3z" fill="#555" /></svg>
      </div>
      <div className="relative ml-[10px] flex h-4 w-4 items-start">
        <span className="-mt-[4px]"><Eps /></span>
        <svg width="8" height="8" className="absolute bottom-0 -right-px"><path d="M1 7.500V2.500c0-2 6-2 6 0v5h-2v-4h-2v4z" fill="#ddd" stroke="#999" strokeWidth=".8" /></svg>
      </div>
      <div className="ml-[5px]"><Caret /></div>
      <div className="ml-[8px]"><TreeArrow /></div>
      <div className="ml-[9px]"><TreeArrow up /></div>
      <div className="ml-[8px]"><SmallSheet /></div>
    </div>
    <div className="flex h-[324px] shrink-0 flex-col border border-[#b4b4b4] bg-white">
      <div className="relative flex h-[19px] shrink-0 items-center overflow-hidden pl-[5px] font-bold">
        <Expander />
        <div className="ml-[8px]"><Check on /></div>
        <div className="ml-[7px]"><PointsIcon /></div>
        <span className="ml-[5px] w-[213px] shrink-0 whitespace-nowrap tracking-[-0.060px]">ignition_points_pnnh_bari-kit</span>
        <div className="flex h-[19px] w-[17px] shrink-0 items-center justify-center bg-[#efefef]"><Funnel gray /></div>
        <span>e</span>
      </div>
      <div className="flex h-[19px] shrink-0 items-center bg-[#308cc6] pl-[23px] font-bold text-white">
        <Check on />
        <div className="ml-[6px] h-4 w-4 border border-[#28567c] bg-[#3987bf]" />
        <span className="ml-[6px] underline decoration-1 underline-offset-2">apn_limites</span>
      </div>
      <div className="flex-1" />
      <HScroll before="" thumb="w-[216px]" />
    </div>
    <Dots cls="h-[5px]" />
    <DockTitle title="Statistics" cls="pr-[2px]" />
    <div className={`flex h-[25px] shrink-0 items-center bg-gradient-to-b from-white to-[#efefef] pb-px pl-[5px] pr-[6px] ${field}`}>
      <PointsIcon />
      <span className="ml-[3px] w-[256px] shrink-0 overflow-hidden whitespace-nowrap">ignition_points_pnnh_bari-kitzberger_da</span>
      <div className="ml-auto"><Caret /></div>
    </div>
    <div className="mt-[3px] flex h-[25px] shrink-0 justify-between">
      <div className={`flex w-[271px] justify-end overflow-hidden bg-white ${field}`}>
        <div className="flex w-[20px] items-center justify-center border-l border-[#b4b4b4] bg-[#f7f7f7]"><Caret /></div>
      </div>
      <div className={`flex w-6 items-center justify-center bg-[#fafafa] pb-[2px] ${field}`}><Eps /></div>
    </div>
    <div className="mt-[3px] flex h-[146px] shrink-0 flex-col border border-[#b4b4b4] bg-white">
      <div className="flex h-[22px] bg-[#efefef] text-center leading-[22px]">
        <div className="w-[100px] border-b border-r border-[#b4b4b4] bg-gradient-to-b from-white to-[#efefef]">Statistic</div>
        <div className="w-[100px] border-b border-[#b4b4b4] bg-gradient-to-b from-white to-[#efefef]">Value</div>
      </div>
    </div>
    <div className="flex h-[29px] shrink-0 items-center">
      <Check />
      <span className="ml-[5px]">Selected features only</span>
      <div className="ml-auto opacity-60"><svg width="14" height="16" viewBox="3 1 19 23" fill="none">{icons.copy}</svg></div>
      <div className="ml-[13px]"><Refresh s={16} /></div>
      <div className={`relative ml-[7px] h-[26px] w-[29px] bg-[#fafafa] pl-[7px] leading-[24px] ${field}`}>
        ...
        <svg width="6" height="4" className="absolute bottom-[3px] right-[1px]"><path d="M0 0h6L3 3.500z" fill="#555" /></svg>
      </div>
    </div>
  </div>
);

const RightDock = () => (
  <div className="flex w-[163px] shrink-0 flex-col border-l border-[#b4b4b4] pl-[6px]">
    <DockTitle title="Identify Results" cls="pr-[2px] pb-[2px]" />
    <div className="flex h-[30px] shrink-0 items-center pb-[3px] pl-2">
      <div className="opacity-25"><SheetIcon /></div>
      <div className="ml-[7px] mr-[6px] h-[12px] w-px bg-[#ccc]" />
      <TreeArrow />
      <div className="ml-2"><TreeArrow up /></div>
      <div className="ml-2"><TreeArrow star /></div>
      <div className="mx-[7px] h-[12px] w-px bg-[#ccc]" />
      <Svg s={16}>
        <YellowSq x={1} y={1} w={8.500} />
        <YellowSq x={4} y={4} w={8.500} />
        <ForbidBadge x={8.500} y={8.500} s={0.680} />
      </Svg>
      <svg width="9" height="8" className="ml-[10px] block"><path d="M.5 1L3.500 4 .5 7M5 1l3 3-3 3" stroke="#555" strokeWidth="1.200" fill="none" /></svg>
    </div>
    <div className="flex h-[737px] shrink-0 flex-col border border-[#b4b4b4] bg-white">
      <div className="h-[21px] border-b border-[#b4b4b4] bg-gradient-to-b from-white to-[#ececec] pl-[2px] leading-[21px]">Feature</div>
      <div className="flex-1" />
      <HScroll before="" thumb="w-[97px]" />
    </div>
    <div className="mt-[5px] flex shrink-0 items-center pl-[5px]">
      <span className="w-[42px]">Mode</span>
      <div className={`flex h-[25px] w-[104px] items-center justify-between bg-gradient-to-b from-white to-[#efefef] pl-1 pr-[6px] ${field}`}>
        <span className="w-[79px] overflow-hidden whitespace-nowrap">Layer Select</span>
        <Caret />
      </div>
    </div>
    <div className="mt-[6px] flex shrink-0 items-center pl-[5px] text-[#bebebe]">
      <span className="w-[38px]">View</span>
      <div className="flex h-[25px] w-[86px] items-center justify-between rounded-[3px] border border-[#cfcfcf] bg-[#f2f2f2] pl-1 pr-[6px]">
        <span>Tree</span>
        <Caret dim />
      </div>
    </div>
  </div>
);

const StatusBar = () => (
  <div className="flex h-[31px] shrink-0 items-center overflow-hidden whitespace-nowrap bg-[#efefef] text-[11px]">
    <div className={`ml-1 flex h-[25px] w-[270px] items-center bg-white pl-2 text-[13px] text-[#8c8c8c] ${field}`}>
      <svg width="13" height="13" className="mr-[7px]" fill="none" stroke="#888" strokeWidth="1.300"><circle cx="5" cy="5" r="4" /><path d="M8 8l4.500 4.500" /></svg>
      Type to locate (Ctrl+K)
    </div>
    <span className="ml-2 mt-[2px] w-[511px] tracking-[0.040px]">Toggles the editing state of the current layer</span>
    <span className="mt-[2px] w-[64px]">Coordinate</span>
    <div className={`h-[22px] w-[106px] bg-white text-center leading-[20px] ${field}`}>-70.869,-41.260</div>
    <svg width="16" height="16" viewBox="0 0 16 16" className="ml-[4px] mr-[13px] block" fill="none" stroke="#222">
      <path d="M9 3.500c1-3 3 0 5-2.500" />
      <ellipse cx="5" cy="8" rx="3" ry="5.500" transform="rotate(-32 5 8)" fill="#ddd" />
      <ellipse cx="10" cy="9.500" rx="3.200" ry="5.500" transform="rotate(-32 10 9.500)" fill="#f4f4f4" />
      <path d="M2 7l4-3M4 2.500l4 8M7 8.500l5-3M8 4l3 4" strokeWidth="1.200" />
    </svg>
    <span className="mt-[2px] w-[33px]">Scale</span>
    <div className={`flex h-[25px] w-[97px] items-center bg-white pl-[3px] ${field}`}>
      <span className="flex-1">1:365924</span>
      <div className="flex h-full w-5 items-center justify-center border-l border-[#b4b4b4] bg-[#f7f7f7]"><Caret /></div>
    </div>
    <svg width="14" height="16" className="ml-[11px] block"><path d="M3.500 7V4.500a3.500 3.500 0 0 1 7 0V7" stroke="#8a8a8a" strokeWidth="1.800" fill="none" /><rect x="1" y="6.500" width="12" height="8.500" rx="1" fill="#555" /></svg>
    <span className="ml-[8px] mt-[2px] w-[55px]">Magnifier</span>
    <div className={`flex h-[25px] w-[98px] items-center justify-between bg-white pl-1 ${field}`}><span className="pt-px">100%</span><Spin /></div>
    <span className="ml-[9px] mt-[2px] w-[56px]">Rotation</span>
    <div className={`flex h-[24px] w-[93px] items-center justify-between bg-white pl-1 ${field}`}><span className="pt-px">0.0 °</span><Spin /></div>
    <div className="ml-[7px]"><Check on /></div>
    <span className="ml-[5px] mt-[2px] w-[55px]">Render</span>
    <svg width="15" height="15" viewBox="0 0 15 15" className="mr-[3px] block" fill="none" stroke="#777"><circle cx="7.500" cy="7.500" r="6.500" fill="#ccc" /><ellipse cx="7.500" cy="7.500" rx="3" ry="6.500" /><path d="M7.500 1v13M1 7.500h13M2 4.200h11M2 10.800h11" /></svg>
    <span className="mt-[2px] w-[87px]">OGC:CRS84</span>
    <svg width="16" height="16" className="block"><path d="M8 1a7 6 0 0 1 7 6c0 3-1 4-2.500 5l1 3.500L9 13C4 13.500 1 11 1 7a7 6 0 0 1 7-6z" fill="#555" /><path d="M4 7h2M7 7h2M10 7h2" stroke="#fff" strokeWidth="1.600" /></svg>
  </div>
);

export default function App() {
  return (
    <div className="flex h-[1050px] w-[1680px] flex-col overflow-hidden bg-[#efefef] font-['DejaVu_Sans',sans-serif] text-[13px] leading-[19px] text-[#111]">
      <div className="grid h-[27px] shrink-0 grid-cols-3 items-center bg-[#242122] pb-[2px] font-['Open_Sans',sans-serif] text-[14px] font-bold text-[#cfcfcf]">
        <div className="flex items-center pl-3">
          <span className="w-[97px] tracking-[-0.250px]">Activities</span>
          <svg width="17" height="17" className="block" fill="none"><circle cx="8" cy="8" r="5.800" stroke="#909090" strokeWidth="3.200" /><path d="M8 8h4l4 4v4h-2z" fill="#777" stroke="#242122" strokeWidth=".8" /></svg>
          <span className="ml-[5px] w-[95px] whitespace-nowrap tracking-[-0.550px]">QGIS Desktop</span>
          <svg width="10" height="5"><path d="M0 0h10L5 5z" fill="#cfcfcf" /></svg>
        </div>
        <div className="flex items-center pl-[238px]">
          <span className="whitespace-pre tracking-[-0.200px]">24 Oct  14:35</span>
          <svg width="16" height="16" viewBox="0 0 16 16" className="ml-[9px] block"><path d="M8 1.500c-3 0-4 2.500-4 5s-.5 4-2 5.500h12c-1.500-1.500-2-3-2-5.500s-1-5-4-5zM6 13h4c0 2-4 2-4 0z" fill="#bdbdbd" /><path d="M2 1l13 14" stroke="#242122" strokeWidth="3" /><path d="M1.500 1l13 14" stroke="#bdbdbd" strokeWidth="1.200" /></svg>
        </div>
        <div className="flex items-center justify-end pr-[15px]">
          <svg width="17" height="14" className="mr-[30px]" fill="#c8c8c8"><rect x="6" y="0" width="10" height="8" /><rect x="5" y="3" width="7" height="9" fill="#242122" /><rect x="5.500" y="11" width="6" height="2" /><rect x="0" y="4" width="10.500" height="7" /></svg>
          <svg width="15" height="16" className="mr-[28px]" fill="none"><path d="M2 8c2-4 5-6 10-6.500M5 9c1-2.500 3-3.500 6-4" stroke="#ccc" strokeWidth="1.600" /><path d="M11 8v7" stroke="#ccc" strokeWidth="3" /><circle cx="5" cy="10.500" r="4.500" fill="#4e9a06" /><path d="M2.500 10.500l2 2 3-4" stroke="#fff" strokeWidth="1.400" /></svg>
          <svg width="18" height="13" className="mr-[11px]"><path d="M9 13L1 4C5-.5 13-.5 17 4z" fill="#c8c8c8" /></svg>
          <svg width="17" height="16" className="mr-[12px]" fill="none"><path d="M0 5.500h3l4-4v13l-4-4H0z" fill="#c8c8c8" /><path d="M9 5.500c1 1.500 1 3.500 0 5M11 3.500c2 3 2 6 0 9M13 1.500c3 4 3 9 0 13" stroke="#c8c8c8" strokeWidth="1.400" /></svg>
          <svg width="14" height="14" className="mr-[12px]" fill="none" stroke="#c8c8c8" strokeWidth="1.800"><path d="M4 2.500a5.300 5.300 0 1 0 6 0M7 .5v6.500" /></svg>
          <svg width="10" height="5"><path d="M0 0h10L5 5z" fill="#cfcfcf" /></svg>
        </div>
      </div>
      <div className="shrink-0 bg-[#242122]">
        <div className="relative flex h-[37px] items-center justify-center rounded-t-[5px] border-b border-[#1c1c1c] bg-[#353535] pb-px font-['Open_Sans',sans-serif] text-[13.500px] font-semibold tracking-[-0.550px] text-[#f2f2f2]">
          *Untitled Project — QGIS
          <svg width="19" height="19" className="absolute right-[8px] top-[8px]"><circle cx="9.500" cy="9.500" r="9.200" fill="#f28c28" /><path d="M6.300 6.300l6.400 6.400M12.700 6.300l-6.400 6.400" stroke="#fff" strokeWidth="2.200" /></svg>
        </div>
      </div>
      <div className="flex h-[22px] shrink-0 items-center border-b border-[#cfcfcf] pl-[2.500px]">
        {menus.map(([a, b, c]) => (
          <span key={a + b + c} className="px-[7.540px]">
            {a}
            <span className="underline decoration-1 underline-offset-[3px]">{b}</span>
            {c}
          </span>
        ))}
      </div>
      <Toolbar items={row1} />
      <Toolbar items={row2} />
      <div className="flex min-h-0 flex-1">
        <LeftDock />
        <div className="flex min-w-0 flex-1 flex-col">
          <div className="h-[855px] border-b border-l border-t border-[#b4b4b4] bg-white">
            <MapCanvas />
          </div>
        </div>
        <RightDock />
      </div>
      <StatusBar />
    </div>
  );
}
